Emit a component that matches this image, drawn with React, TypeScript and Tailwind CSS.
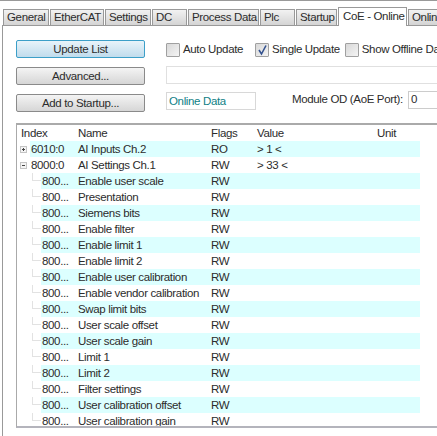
const tabs: [string, number][] = [["General",46],["EtherCAT",54],["Settings",46],["DC",35],["Process Data",71],["Plc",35],["Startup",41]];
const rows: [string,string,string,string][] = [
["6010:0","AI Inputs Ch.2","RO","> 1 <"],["8000:0","AI Settings Ch.1","RW","> 33 <"],
["800...","Enable user scale","RW",""],["800...","Presentation","RW",""],["800...","Siemens bits","RW",""],["800...","Enable filter","RW",""],
["800...","Enable limit 1","RW",""],["800...","Enable limit 2","RW",""],["800...","Enable user calibration","RW",""],["800...","Enable vendor calibration","RW",""],
["800...","Swap limit bits","RW",""],["800...","User scale offset","RW",""],["800...","User scale gain","RW",""],["800...","Limit 1","RW",""],
["800...","Limit 2","RW",""],["800...","Filter settings","RW",""],["800...","User calibration offset","RW",""],["800...","User calibration gain","RW",""]];
function Btn({t,blue}:{t:string;blue?:boolean}){return <div className={`w-[129px] h-[18px] pt-[1px] flex items-center justify-center rounded-[2px] border ${blue?"border-[#3c9fc8] bg-gradient-to-b from-[#e8f4fa] to-[#c0dcec]":"border-[#8a8a8a] bg-gradient-to-b from-[#f4f4f4] to-[#d6d6d6]"}`}>{t}</div>}
function Chk({t,on}:{t:string;on?:boolean}){return <div className="flex items-center gap-[3px]"><div className="w-[14px] h-[14px] border border-[#a0a0a0] rounded-[1px] bg-gradient-to-br from-[#d8d8d8] to-[#f4f4f4] flex items-center justify-center">{on&&<svg width="12" height="12" viewBox="0 0 12 12"><path d="M3 6l2.5 4L10 1.5" fill="none" stroke="#33518f" strokeWidth="1.6"/></svg>}</div><span className="whitespace-nowrap pt-[1px]">{t}</span></div>}
export default function App(){return <div className="w-[437px] h-[436px] overflow-hidden bg-white text-[11.5px] tracking-[-0.35px] leading-none text-[#2c2c2c] font-['Liberation_Sans',sans-serif]">
<div className="h-[1px] bg-[#999]"/>
<div className="h-[24px] pl-[3px] flex items-end gap-[1px] whitespace-nowrap relative z-10">
{tabs.map(([t,w])=><div key={t} style={{width:w}} className="h-[16px] shrink-0 border border-b-0 border-[#999] bg-gradient-to-b from-[#f2f2f2] to-[#d4d4d4] pl-[3px] pt-[2px]">{t}</div>)}
<div className="h-[19px] w-[69px] shrink-0 border border-b-0 border-[#999] bg-white pl-[4px] pt-[3px] mb-[-1px] relative">CoE - Online</div>
<div className="h-[16px] w-[40px] shrink-0 border border-b-0 border-[#999] bg-gradient-to-b from-[#f2f2f2] to-[#d4d4d4] pl-[3px] pt-[2px]">Online</div>
</div>
<div className="ml-[2px] h-[411px] border-l border-t border-[#999] pl-[13px] pt-[14px] flex flex-col">
<div className="flex h-[84px]">
<div className="w-[150px] shrink-0 flex flex-col gap-[9px]"><Btn t="Update List" blue/><Btn t="Advanced..."/><Btn t="Add to Startup..."/></div>
<div className="flex flex-col min-w-0 grow">
<div className="h-[18px] flex items-center pt-[1px] whitespace-nowrap"><Chk t="Auto Update"/><div className="w-[12px] shrink-0"/><Chk t="Single Update" on/><div className="w-[5px] shrink-0"/><Chk t="Show Offline Data"/></div>
<div className="h-[18px] mt-[8px] border border-[#e0e0e0] w-[300px]"/>
<div className="flex items-center mt-[8px] h-[18px]">
<div className="w-[90px] h-[18px] pt-[1px] shrink-0 border border-[#d8d8d8] flex items-center pl-[2px] text-[#0f7f86]">Online Data</div>
<span className="ml-[36px] mb-[2px] whitespace-nowrap">Module OD (AoE Port):</span>
<div className="ml-[5px] mb-[2px] h-[18px] w-[60px] shrink-0 border border-[#ccc] flex items-center pl-[2px]">0</div>
</div>
</div>
</div>
<div className="mt-[-1px] h-[305px] w-[440px] border-l border-t-2 border-b-2 border-[#aaa] border-b-[#b4b4bc] overflow-hidden">
<div className="h-[16px] pt-[1px] flex items-center"><span className="w-[61px] pl-[4px]">Index</span><span className="w-[133px]">Name</span><span className="w-[46px]">Flags</span><span className="w-[120px]">Value</span><span>Unit</span></div>
{rows.map((r,i)=>{const top=i<2;const band=i%2===0?"bg-[#dcffff]":"";return <div key={i} className="h-[16px] flex items-center">
<div className="w-[61px] flex items-center shrink-0 h-full">
{top?<><svg width="7" height="7" viewBox="0 0 7 7" className="ml-[3px] shrink-0"><rect x=".5" y=".5" width="6" height="6" fill="#f4f4f4" stroke="#c4c4c4"/><path d={i===0?"M2 3.5h3M3.5 2v3":"M2 3.5h3"} stroke="#444"/></svg>
<div className={`ml-[3px] grow h-full flex items-center pl-[1px] pt-[1px] ${band}`}>{r[0]}</div></>
:<><div className="ml-[15px] w-[9px] h-[8px] shrink-0 border-l border-b border-[#e2e2e2] self-start"/><div className={`grow h-full flex items-center pl-[1px] pt-[1px] ${band}`}>{r[0]}</div></>}
</div>
<div className={`flex items-center h-full w-[342px] pt-[1px] ${band}`}>
<span className="w-[133px] whitespace-nowrap">{r[1]}</span><span className="w-[46px]">{r[2]}</span><span>{r[3]}</span></div>
</div>})}
</div>
</div></div>}
